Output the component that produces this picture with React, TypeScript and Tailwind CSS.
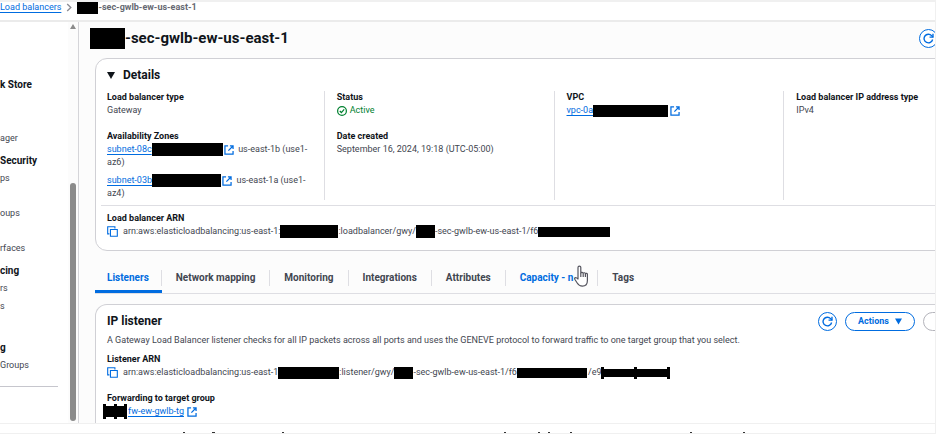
import type { ReactNode } from "react"

function Redacted({ className = "" }: { className?: string }) {
  return <span aria-hidden="true" className={`inline-block shrink-0 bg-black ${className}`} />
}

function ExternalIcon() {
  return (
    <svg viewBox="0 0 16 16" className="inline-block h-[10px] w-[10px] shrink-0" fill="none" stroke="#006ce0" strokeWidth="2">
      <path d="M6.500 1.500h-5v13h13v-5" />
      <path d="M9.500 1.500h5v5M14 2 7 9" />
    </svg>
  )
}

function RefreshButton({ className = "" }: { className?: string }) {
  return (
    <button
      type="button"
      aria-label="Refresh"
      className={`flex h-[19px] w-[19px] shrink-0 items-center justify-center rounded-full border border-[#006ce0] bg-white text-[#006ce0] ${className}`}
    >
      <svg viewBox="0 0 16 16" className="h-[11px] w-[11px]" fill="none" stroke="currentColor" strokeWidth="2">
        <path d="M14 9.500A6.300 6.300 0 1 1 12.500 3.800L14.500 6" />
        <path d="M14.500 1v5H9.500" />
      </svg>
    </button>
  )
}

function CopyButton({ label }: { label: string }) {
  return (
    <button type="button" aria-label={label} className="mr-[5px] shrink-0 text-[#006ce0]">
      <svg viewBox="0 0 16 16" className="h-[11px] w-[11px]" fill="none" stroke="currentColor" strokeWidth="1.600">
        <path d="M3.500 11.500H1V1h10.500v2.500" />
        <path d="M5 5h10v10H5z" />
      </svg>
    </button>
  )
}

function Caret({ className = "w-2" }: { className?: string }) {
  return (
    <svg viewBox="0 0 8 7" className={`h-[7px] shrink-0 ${className}`} fill="currentColor">
      <path d="M0 0h8L4 7z" />
    </svg>
  )
}

function Field({ label, children }: { label: string; children: ReactNode }) {
  return (
    <div>
      <dt className="font-bold text-[#0f141a]">{label}</dt>
      <dd>{children}</dd>
    </div>
  )
}

const linkClass = "text-[#006ce0] underline underline-offset-2"

const navItems = [
  { text: "k Store", heading: true, space: "mt-[56px]" },
  { text: "ager", heading: false, space: "mt-[41px]" },
  { text: "Security", heading: true, space: "mt-[9px]" },
  { text: "ps", heading: false, space: "mt-[5px]" },
  { text: "oups", heading: false, space: "mt-[22px]" },
  { text: "rfaces", heading: false, space: "mt-[22px]" },
  { text: "cing", heading: true, space: "mt-[9px]" },
  { text: "rs", heading: false, space: "mt-[5px]" },
  { text: "s", heading: false, space: "mt-[5px]" },
  { text: "g", heading: true, space: "mt-[28px]" },
  { text: "Groups", heading: false, space: "mt-[5px]" },
]

const subnets = [
  { id: "subnet-08c", mask: "w-[71px]", zone: "us-east-1b (use1-az6)" },
  { id: "subnet-03b", mask: "w-[69px]", zone: "us-east-1a (use1-az4)" },
]

const tabs = ["Listeners", "Network mapping", "Monitoring", "Integrations", "Attributes", "Capacity - n", "Tags"]

function Breadcrumbs() {
  return (
    <nav aria-label="Breadcrumbs" className="flex h-5 items-start border-b-2 border-[#ebebeb] bg-white leading-[11px]">
      <a href="#" className={linkClass}>Load balancers</a>
      <svg viewBox="0 0 6 10" className="mx-[5px] mt-[1px] h-[9px] w-[6px]" fill="none" stroke="#8c8c94" strokeWidth="1.500">
        <path d="m1 1 4 4-4 4" />
      </svg>
      <Redacted className="h-[12px] w-[21px]" />
      <span className="font-bold text-[#656871]">-sec-gwlb-ew-us-east-1</span>
    </nav>
  )
}

function Sidebar() {
  return (
    <aside className="flex w-[79px] shrink-0 justify-between border-r border-[#d5d5d9] bg-white">
      <nav className="w-[58px] overflow-hidden whitespace-nowrap">
        <ul>
          {navItems.map((item) => (
            <li key={item.text} className={item.space}>
              <a href="#" className={`block leading-[13px] ${item.heading ? "text-[10px] font-bold text-[#0f141a]" : "text-[#424650]"}`}>
                {item.text}
              </a>
            </li>
          ))}
        </ul>
        <hr className="mt-[14px] border-[#c6c6cd]" />
      </nav>
      <div className="flex w-[10px] flex-col items-center bg-[#fcfcfc] pb-[2px]">
        <svg viewBox="0 0 6 5" className="mt-[2px] h-[5px] w-[6px]" fill="#8b8b8b">
          <path d="M3 0 6 5H0z" />
        </svg>
        <div className="mt-[154px] w-[6px] flex-1 rounded-full bg-[#8b8b8b]" />
      </div>
    </aside>
  )
}

function Details() {
  return (
    <section className="rounded-xl border border-[#d0d0d5] bg-white px-[11px] pb-3 pt-2">
      <h2 className="flex items-center gap-2 text-[12px] leading-4 font-bold text-[#0f141a]">
        <Caret />
        Details
      </h2>
      <dl className="mt-2 grid grid-cols-4 gap-x-3">
        <div className="space-y-[13px] border-r border-[#dedee3] pr-3">
          <Field label="Load balancer type">Gateway</Field>
          <Field label="Availability Zones">
            <div className="space-y-[5px]">
              {subnets.map((subnet) => (
                <p key={subnet.id}>
                  <a href="#" className={linkClass}>
                    {subnet.id}
                    <Redacted className={`mr-[1px] h-[13px] align-top ${subnet.mask}`} />
                    <ExternalIcon />
                  </a>
                  &nbsp; {subnet.zone}
                </p>
              ))}
            </div>
          </Field>
        </div>
        <div className="space-y-[13px] border-r border-[#dedee3]">
          <Field label="Status">
            <span className="flex items-center gap-[3px] text-[#00802f]">
              <svg viewBox="0 0 16 16" className="h-[10px] w-[10px]" fill="none" stroke="currentColor" strokeWidth="2">
                <circle cx="8" cy="8" r="7" />
                <path d="m4.500 8 2.500 2.500L11.500 5.500" />
              </svg>
              Active
            </span>
          </Field>
          <Field label="Date created">September 16, 2024, 19:18 (UTC-05:00)</Field>
        </div>
        <div className="border-r border-[#dedee3]">
          <Field label="VPC">
            <a href="#" className={`flex items-center ${linkClass}`}>
              vpc-0a
              <Redacted className="mr-[2px] h-[12px] w-[75px]" />
              <ExternalIcon />
            </a>
          </Field>
        </div>
        <div>
          <Field label="Load balancer IP address type">IPv4</Field>
        </div>
      </dl>
      <dl className="-mx-[6px] mt-[5px] border-t border-[#dedee3] px-[6px] pt-[6px]">
        <Field label="Load balancer ARN">
          <span className="flex items-center whitespace-nowrap">
            <CopyButton label="Copy load balancer ARN" />
            arn:aws:elasticloadbalancing:us-east-1:
            <Redacted className="h-[13px] w-[58px]" />
            :loadbalancer/gwy/
            <Redacted className="h-[13px] w-[19px]" />
            -sec-gwlb-ew-us-east-1/f6
            <Redacted className="h-[10px] w-[72px]" />
          </span>
        </Field>
      </dl>
    </section>
  )
}

function Tabs() {
  return (
    <div role="tablist" className="mt-[14px] flex items-end border-b border-[#dedee3] text-[10px] font-bold">
      {tabs.map((tab) => {
        const active = tab === "Listeners"
        const hovered = tab.startsWith("Capacity")
        return (
          <button
            key={tab}
            type="button"
            role="tab"
            aria-selected={active}
            className={`relative flex h-7 items-center border-b-[3px] ${active ? "border-[#006ce0]" : "border-transparent"} ${active || hovered ? "text-[#006ce0]" : "text-[#424650]"}`}
          >
            <span
              className={`h-4 leading-4 ${active ? "px-3" : hovered ? "pr-6 pl-[14px]" : "px-[14px]"} ${tab === "Tags" ? "" : "border-r border-[#dedee3]"}`}
            >
              {tab}
            </span>
            {hovered && (
              <svg viewBox="0 0 14 22" className="absolute right-[10px] top-0 h-[22px] w-[14px]" fill="#fff" stroke="#55555f" strokeWidth="1.200" strokeLinejoin="round">
                <path d="M4 14V2.500a1.400 1.400 0 0 1 2.800 0V8a1.300 1.300 0 0 1 2.400.3 1.200 1.200 0 0 1 2.200.5 1.100 1.100 0 0 1 2 .8v6c0 3.500-2 5.600-5 5.600-2.600 0-4-1.200-5.200-3.200L.8 14.200c-.6-1.200.8-2.200 1.800-1.300z" />
                <path d="M6.800 8v4M9.200 8.500V12M11.400 9v3" fill="none" />
              </svg>
            )}
          </button>
        )
      })}
    </div>
  )
}

function Handles({ className = "" }: { className?: string }) {
  return (
    <span aria-hidden="true" className={`flex shrink-0 items-stretch justify-between bg-black ${className}`}>
      <span className="-my-[2px] w-[3px] bg-black" />
      <span className="-my-[2px] w-[3px] bg-black" />
      <span className="-my-[2px] w-[3px] bg-black" />
    </span>
  )
}

function Listener() {
  return (
    <section className="mt-[10px] rounded-t-xl border border-b-0 border-[#d0d0d5] bg-white px-[11px] pb-[5px] pt-2">
      <header className="flex items-start justify-between">
        <div>
          <h2 className="text-[12px] leading-4 font-bold text-[#0f141a]">IP listener</h2>
          <p className="mt-[5px]">
            A Gateway Load Balancer listener checks for all IP packets across all ports and uses the GENEVE protocol to forward traffic to one target group that you select.
          </p>
        </div>
        <div className="-mt-[1px] flex gap-2">
          <RefreshButton />
          <button type="button" className="flex h-[19px] w-[70px] items-center justify-center gap-[6px] rounded-full border border-[#006ce0] font-bold text-[#006ce0]">
            Actions
            <Caret className="w-[7px]" />
          </button>
          <button type="button" disabled aria-label="Add listener" className="h-[19px] w-[91px] rounded-full border border-[#b4b4bb]" />
        </div>
      </header>
      <dl className="mt-[6px] space-y-[13px]">
        <Field label="Listener ARN">
          <span className="flex items-center whitespace-nowrap">
            <CopyButton label="Copy listener ARN" />
            arn:aws:elasticloadbalancing:us-east-1
            <Redacted className="h-[12px] w-[61px]" />
            :listener/gwy/
            <Redacted className="h-[12px] w-[19px]" />
            -sec-gwlb-ew-us-east-1/f6
            <Redacted className="mr-[1px] h-[10px] w-[70px]" />
            /e9
            <Handles className="h-[8px] w-[69px]" />
          </span>
        </Field>
        <Field label="Forwarding to target group">
          <a href="#" className={`-ml-1 flex items-center ${linkClass}`}>
            <Handles className="mr-[1px] h-[11px] w-[24px]" />
            <span className="mr-[3px]">fw-ew-gwlb-tg</span>
            <ExternalIcon />
          </a>
        </Field>
      </dl>
    </section>
  )
}

export default function App() {
  return (
    <div className="overflow-hidden border-t-2 border-r border-[#f0f0f0] bg-white font-[Roboto,sans-serif] text-[9px] leading-[13px] text-[#424650]">
      <Breadcrumbs />
      <div className="flex">
        <Sidebar />
        <main className="min-w-0 flex-1 bg-[#fcfcfc] pl-4">
          <header className="-ml-[5px] flex items-center pt-1 pb-2">
            <Redacted className="h-[21px] w-[35px]" />
            <h1 className="flex-1 text-[15px] leading-6 font-bold text-[#0f141a]">-sec-gwlb-ew-us-east-1</h1>
            <RefreshButton className="-mr-[3px]" />
          </header>
          <div className="-mr-[91px]">
            <Details />
            <Tabs />
            <Listener />
          </div>
        </main>
      </div>
      <footer className="border-y border-[#f0f0f0] pt-2">
        <svg aria-hidden="true" className="block h-[1px] w-full" fill="#333">
          <path d="M183 0h2v1h-2zM212 0h3v1h-3zM282 0h2v1h-2zM504 0h2v1h-2zM538 0h2v1h-2zM548 0h2v1h-2zM570 0h2v1h-2zM690 0h2v1h-2zM743 0h2v1h-2z" />
        </svg>
      </footer>
    </div>
  )
}
